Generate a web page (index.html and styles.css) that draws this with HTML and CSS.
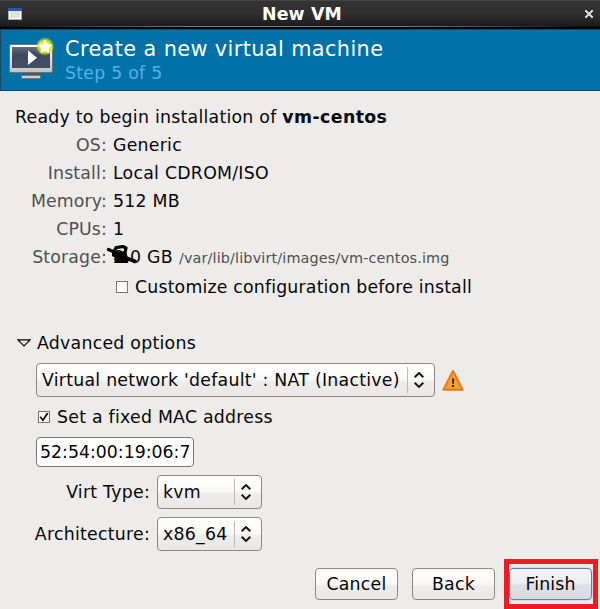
FILE: index.html
```html
<!DOCTYPE html>
<html lang="en">
<head>
<meta charset="utf-8">
<title>New VM</title>
<link rel="stylesheet" href="styles.css">
</head>
<body>
<div class="window">
  <div class="titlebar">
    <svg class="win-icon" width="14" height="12" viewBox="0 0 14 12"><rect width="14" height="12" fill="#a5a79f"/><rect x="1" y="1" width="12" height="10" fill="#fff"/><rect width="14" height="3" fill="#2858a8"/><rect x="2" y="3" width="10" height="7" fill="#dfe2dc"/></svg>
    <span class="win-title">New VM</span>
    <svg class="close" width="8" height="8" viewBox="0 0 8 8" fill="#d2d2d2" shape-rendering="crispEdges"><path d="M0 0h2v1h1v1h2V1h1V0h2v2H7v1H6v2h1v1h1v2H6V7H5V6H3v1H2v1H0V6h1V5h1V3H1V2H0z"/></svg>
  </div>
  <header class="header">
    <svg class="vm-icon" width="48" height="48" viewBox="0 0 48 48">
      <defs>
        <linearGradient id="frame" x2="0" y2="1"><stop stop-color="#fff"/><stop offset="1" stop-color="#c2c2c2"/></linearGradient>
        <linearGradient id="screen" x2="0" y2="1"><stop stop-color="#626e80"/><stop offset=".35" stop-color="#3d4b60"/><stop offset="1" stop-color="#414e63"/></linearGradient>
        <radialGradient id="glow"><stop offset=".4" stop-color="#efff12"/><stop offset=".7" stop-color="#dbe91a" stop-opacity=".85"/><stop offset="1" stop-color="#b4d030" stop-opacity="0"/></radialGradient>
      </defs>
      <path d="M18 36h13v5H18z" fill="#55585b"/>
      <rect x="13.500" y="39.500" width="19" height="3" rx="1" fill="#d0d0d0" stroke="#77797b"/>
      <rect x="1.500" y="8.500" width="43" height="28" rx="1.500" fill="url(#frame)" stroke="#6d7378"/>
      <rect x="4" y="11" width="38" height="21" fill="url(#screen)"/>
      <path d="M20 14.500v14.500l9-7.200z" fill="#fff"/>
      <circle cx="37" cy="10.500" r="9.500" fill="url(#glow)"/>
      <path d="M37 4.300l1.900 4.200 4.600.5-3.400 3.100.9 4.500-4-2.300-4 2.300.9-4.500-3.400-3.100 4.600-.5z" fill="#fff" stroke="#fff" stroke-width=".8" stroke-linejoin="round"/>
    </svg>
    <div class="header-text">
      <div class="heading">Create a new virtual machine</div>
      <div class="step">Step 5 of 5</div>
    </div>
  </header>
  <main class="content">
    <div class="ready">Ready to begin installation of <b>vm-centos</b></div>
    <div class="summary">
      <span class="label">OS:</span><span>Generic</span>
      <span class="label">Install:</span><span>Local CDROM/ISO</span>
      <span class="label">Memory:</span><span>512 MB</span>
      <span class="label">CPUs:</span><span>1</span>
      <span class="label">Storage:</span>
      <span class="storage"><span class="size">8.0 GB</span><span class="path">/var/lib/libvirt/images/vm-centos.img</span>
        <svg class="scribble" width="34" height="22" viewBox="0 0 34 22"><path d="M2.500 5.500l9 4M8.500 7l1.500-3.300 7-1.200 3 1.500-1 4.500-5 2.500" fill="none" stroke="#000" stroke-width="3.200" stroke-linejoin="round" stroke-linecap="round"/><path d="M6 8l5-1 3 1 6-1 1.500 5.500 9 3.500 1 2-2.500 1.500-6-2.500-1.500.5v1.500H8.500L8 18.500l2-2.500-.5-2L6 12z"/></svg>
      </span>
    </div>
    <div class="check-row customize"><span class="checkbox"></span><span>Customize configuration before install</span></div>
    <div class="expander">
      <svg width="14" height="8" viewBox="0 0 14 8"><path d="M1 .8h12L7 6.800z" fill="#fff" stroke="#000" stroke-width="1.200"/></svg>
      <span>Advanced options</span>
    </div>
    <div class="network">
      <div class="select net-select"><span>Virtual network 'default' : NAT (Inactive)</span><i></i><svg width="10" height="16" viewBox="0 0 10 16"><path d="M.7 5.200L5 1l4.300 4.200M.7 10.800L5 15l4.300-4.200"/></svg></div>
      <svg class="warning" width="22" height="21" viewBox="0 0 22 21"><path d="M11 1.500L20.300 19.500H1.700z" fill="#f57900" stroke="#e2751a" stroke-width="2.600" stroke-linejoin="round"/><path d="M11 3.200L18.900 18.500H3.100z" fill="#f9a13a" stroke="#f98d20" stroke-width="1.400" stroke-linejoin="round"/><path d="M10 8.500h2.200l-.4 5.500h-1.400zM10.100 15h2v2h-2z" fill="#222"/></svg>
    </div>
    <div class="check-row mac-check"><span class="checkbox"><svg width="10" height="10" viewBox="0 0 10 10"><path d="M1.300 4.700l2.600 3.500L8.700 1" fill="none" stroke="#111" stroke-width="1.900"/></svg></span><span>Set a fixed MAC address</span></div>
    <div class="entry">52:54:00:19:06:7</div>
    <div class="options">
      <span class="opt-label">Virt Type:</span>
      <div class="select"><span>kvm</span><i></i><svg width="10" height="16" viewBox="0 0 10 16"><path d="M.7 5.200L5 1l4.300 4.200M.7 10.800L5 15l4.300-4.200"/></svg></div>
      <span class="opt-label">Architecture:</span>
      <div class="select"><span>x86_64</span><i></i><svg width="10" height="16" viewBox="0 0 10 16"><path d="M.7 5.200L5 1l4.300 4.200M.7 10.800L5 15l4.300-4.200"/></svg></div>
    </div>
    <div class="actions">
      <div class="button">Cancel</div>
      <div class="button">Back</div>
      <div class="button primary">Finish<span class="highlight"></span></div>
    </div>
  </main>
</div>
</body>
</html>
```
FILE: styles.css
```css
* { box-sizing: border-box; }
body { margin: 0; overflow: hidden; }
.window {
  width: 600px;
  height: 609px;
  background: #edeceb;
  color: #060606;
  font: 17.33px/28px "DejaVu Sans", sans-serif;
  letter-spacing: .25px;
  white-space: nowrap;
}
svg { display: block; flex: none; }
.titlebar {
  height: 29px;
  padding: 0 7px 1px 8px;
  display: flex;
  align-items: center;
  justify-content: space-between;
  background:
    linear-gradient(90deg, #111, #7288ae 35%, #7288ae 65%, #111 97%) 0 26px / 100% 1px no-repeat,
    linear-gradient(#000, #000) 0 27px / 100% 2px no-repeat,
    linear-gradient(#555 0, #333 1px, #303030 14px, #191919 27px);
}
.win-title { color: #fff; font-weight: bold; margin-left: -3px; letter-spacing: .15px; }
.header {
  height: 62px;
  padding: 6px 7px;
  display: flex;
  gap: 9px;
  background: #0072a8;
  border: 1px solid #164863;
  border-right: 0;
}
.heading { color: #fff; font-size: 20.8px; line-height: 26px; letter-spacing: .4px; }
.step { color: #58b0e4; line-height: 22px; }
.content { padding: 12px 0 0; }
.ready { padding-left: 15px; }
.ready b { letter-spacing: .4px; }
.summary { display: grid; grid-template-columns: 107px 1fr; column-gap: 6px; }
.label { color: #505050; text-align: right; letter-spacing: .15px; }
.storage { position: relative; display: flex; gap: 6px; }
.path { color: #505050; font-size: 14.4px; line-height: 30px; height: 28px; letter-spacing: .14px; }
.scribble { position: absolute; left: -7px; top: 1px; }
.check-row { display: flex; align-items: center; height: 28px; }
.checkbox {
  width: 12px;
  height: 12px;
  border: 1px solid #777;
  background: #fff;
  flex: none;
}
.customize { margin: 2px 0 0 116px; gap: 7px; letter-spacing: .18px; }
.expander { display: flex; align-items: center; gap: 6px; margin: 28px 0 0 17px; }
.network { display: flex; align-items: center; gap: 7px; margin: 6px 0 0 36px; }
.select {
  height: 34px;
  width: 105px;
  padding: 0 10px 0 5px;
  display: flex;
  align-items: center;
  border: 1px solid #8a8986;
  border-radius: 4px;
  background: linear-gradient(#fff, #f8f8f7 50%, #eeedec 55%, #e8e7e5);
}
.select span { flex: 1; }
.select i { width: 1px; height: 26px; background: #bcbbb9; margin-right: 6px; }
.select path { fill: none; stroke: #111; stroke-width: 1.9; }
.net-select { width: 399px; }
.mac-check { margin: 6px 0 0 38px; gap: 7px; }
.entry {
  width: 158px;
  height: 30px;
  margin: 6px 0 0 36px;
  padding-left: 3px;
  border: 1px solid #777;
  border-radius: 4px;
  background: #fff;
  letter-spacing: 0;
}
.options {
  display: grid;
  grid-template-columns: 150px 105px;
  gap: 8px 7px;
  align-items: center;
  margin-top: 8px;
}
.opt-label { text-align: right; }
.actions { display: flex; justify-content: flex-end; gap: 14px; padding-right: 8px; margin-top: 17px; }
.button {
  position: relative;
  width: 83px;
  height: 32px;
  line-height: 30px;
  text-align: center;
  border: 1px solid #8a8986;
  border-radius: 4px;
  background: linear-gradient(#fff, #f9f9f8 50%, #eeedec 58%, #e9e8e6);
}
.primary {
  letter-spacing: .1px;
  border-color: #5b7fae;
  background: linear-gradient(#f3f6f9, #ebedf1 48%, #dce0e5 54%, #d8dce1);
  box-shadow: 0 0 0 1px #d2dbe6;
}
.highlight { position: absolute; left: -6px; top: -10px; width: 94px; height: 50px; border: 5px solid #ed1c24; }
```
